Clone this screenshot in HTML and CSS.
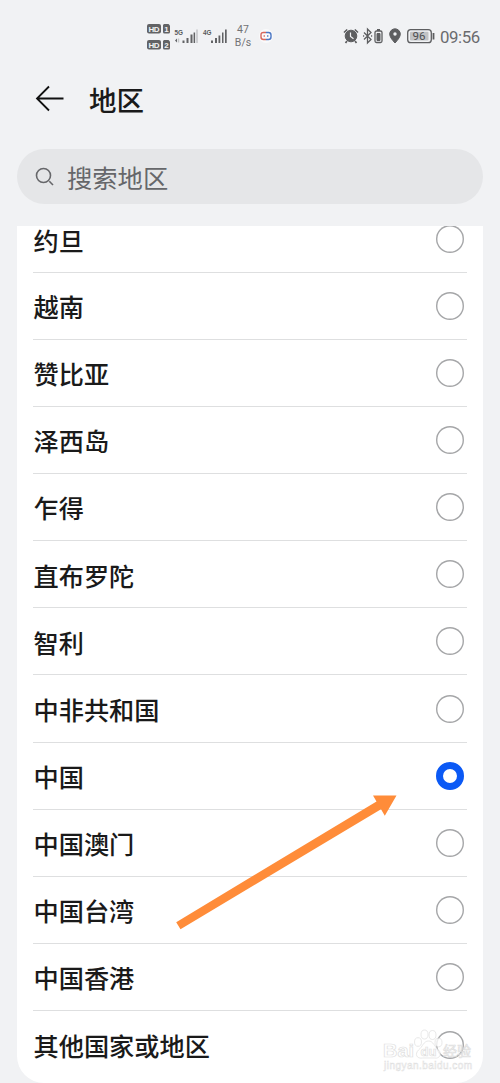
FILE: index.html
```html
<!DOCTYPE html>
<html lang="zh-CN">
<head>
<meta charset="utf-8">
<title>地区</title>
<link rel="stylesheet" href="styles.css">
</head>
<body>
<div class="screen">
  <div class="status">
    <svg class="status-net" width="86" height="32" viewBox="0 0 86 32">
      <g fill="#626365">
        <rect x="0" y="4" width="14" height="9.500" rx="2"/>
        <path d="M17 4h4.500l1.500 1.500v6.500q0 1.500-1.500 1.500h-4q-1.500 0-1.500-1.500v-7z"/>
        <rect x="0" y="20" width="14" height="9.500" rx="2"/>
        <path d="M17 20h4.500l1.500 1.500v6.500q0 1.500-1.500 1.500h-4q-1.500 0-1.500-1.500v-7z"/>
        <path d="M35.500 20.500h2v2.500h-2zM39.500 18h2v5h-2zM43.500 14.500h2v8.500h-2zM46.600 12.500h1.500v10.500h-1.500zM64 20.500h2v2.500h-2zM68 18h2v5h-2zM71.500 15.500h1.800v7.500h-1.800zM75 12.500h1.500v10.500h-1.500zM78 9.500h1.700v13.500h-1.700z"/>
        <path d="M28 20.500l2-2v4z"/>
      </g>
      <path d="M31.500 18.500v4M50 9.500v13.500" stroke="#c4c5c7" stroke-width="1.500"/>
      <g class="hd">
        <text x="1.600" y="11.700" textLength="11">HD</text><text x="17.300" y="11.700">1</text>
        <text x="1.600" y="27.700" textLength="11">HD</text><text x="17.300" y="27.700">2</text>
      </g>
      <g class="gen"><text x="27.500" y="15" textLength="8.500" lengthAdjust="spacingAndGlyphs">5G</text><text x="56" y="15" textLength="8.500" lengthAdjust="spacingAndGlyphs">4G</text></g>
    </svg>
    <div class="speed"><span>47</span><span>B/s</span></div>
    <svg class="status-bot" width="14" height="14" viewBox="0 0 14 14">
      <circle cx="7" cy="7" r="7" fill="#fafafb"/>
      <path d="M7 3.500H4.500Q2 3.500 2 6v2q0 2.500 2.500 2.500H7" fill="none" stroke="#d6675c" stroke-width="1.400"/>
      <path d="M7 3.500h2.500Q12 3.500 12 6v2q0 2.500-2.500 2.500H7" fill="none" stroke="#4c78c4" stroke-width="1.400"/>
      <path d="M5.200 6v2" stroke="#d6675c"/><path d="M8.800 6v2" stroke="#4c78c4"/>
    </svg>
    <svg class="status-icons" width="92" height="18" viewBox="0 0 92 18">
      <g fill="none" stroke="#5d5e60">
        <circle cx="8" cy="9" r="5.800" fill="#5d5e60"/>
        <path d="M1 5.500L4.200 2.500M11.800 2.500L15 5.500M4 14L2.500 16M12 14l1.500 2" stroke-width="1.700"/>
        <path d="M7.500 5.500v4l3 2.200" stroke="#f1f2f4" stroke-width="1.200"/>
        <path d="M21 5.500l7 7-3.500 3.500V2L28 5.500l-7 7" stroke-width="1.300"/>
        <circle cx="20.700" cy="9" r=".4"/><circle cx="28.700" cy="9" r=".4"/>
        <rect x="32" y="4" width="7" height="11.500" rx="1.500" stroke-width="1.300"/>
        <path d="M34 3h3" stroke-width="2"/>
        <path d="M34 6.500h3v7h-3z" fill="#5d5e60"/>
        <path d="M52 1.800a5.300 5.300 0 0 1 5.300 5.300Q57.300 10.500 52 16Q46.700 10.500 46.700 7.100A5.300 5.300 0 0 1 52 1.800z" fill="#5d5e60"/>
        <circle cx="52" cy="7" r="1.700" fill="#f1f2f4" stroke="none"/>
        <rect x="64.700" y="2.700" width="23.600" height="13" rx="3" stroke-width="1.300"/>
        <rect x="67" y="4.800" width="18.500" height="8.800" rx="1" fill="#c2c3c5" stroke="none"/>
        <path d="M90.500 6v6.500" stroke-width="1.800"/>
      </g>
      <text class="battery" x="69.500" y="13.200" textLength="13">96</text>
    </svg>
    <span class="clock">09:56</span>
  </div>

  <div class="header">
    <svg width="30" height="30" viewBox="0 0 30 30" fill="none" stroke="#111" stroke-width="1.800">
      <path d="M28.500 14.500H2M14 2.500L2 14.500l12 12"/>
    </svg>
    <h1 class="title">地区</h1>
  </div>

  <div class="search">
    <svg width="20" height="20" viewBox="0 0 20 20" fill="none" stroke="#66676a" stroke-width="1.600">
      <circle cx="8.500" cy="8.500" r="7"/><path d="M14.300 14.300l3.700 3.700"/>
    </svg>
    <span class="search-text">搜索地区</span>
  </div>

  <div class="list">
    <div class="row first"><span>约旦</span><i class="radio"></i></div>
    <div class="row"><span>越南</span><i class="radio"></i></div>
    <div class="row"><span>赞比亚</span><i class="radio"></i></div>
    <div class="row"><span>泽西岛</span><i class="radio"></i></div>
    <div class="row"><span>乍得</span><i class="radio"></i></div>
    <div class="row"><span>直布罗陀</span><i class="radio"></i></div>
    <div class="row"><span>智利</span><i class="radio"></i></div>
    <div class="row"><span>中非共和国</span><i class="radio"></i></div>
    <div class="row"><span>中国</span><i class="radio checked"></i></div>
    <div class="row"><span>中国澳门</span><i class="radio"></i></div>
    <div class="row"><span>中国台湾</span><i class="radio"></i></div>
    <div class="row"><span>中国香港</span><i class="radio"></i></div>
    <div class="row"><span>其他国家或地区</span><i class="radio"></i></div>
  </div>

  <svg class="arrow" width="222" height="136" viewBox="0 0 222 136">
    <path fill="#ff8c39" d="M1.200 127.200L201.500 6.500L198 0.500L221.500 0.500L209.800 20.800L206 14.200L5.500 134.200Z"/>
  </svg>

  <svg class="watermark" width="96" height="46" viewBox="0 0 96 46">
    <g fill="#fff" stroke="#d8d8d8" stroke-width=".7">
      <ellipse cx="36" cy="14" rx="3.500" ry="4.300"/>
      <ellipse cx="42.500" cy="6.500" rx="3.500" ry="4.500"/>
      <ellipse cx="50.500" cy="7" rx="3.500" ry="4.500"/>
      <ellipse cx="56.500" cy="14.500" rx="3.500" ry="4.300"/>
      <path d="M46.500 13c5 0 6 6 10 9 4 4 1 9-4 8h-12c-6 1-8-4-4-8 4-3 5-9 10-9z"/>
      <text class="wm-brand" x="1" y="29" textLength="31" lengthAdjust="spacingAndGlyphs">Bai</text>
      <text class="wm-du" x="38.500" y="28">du</text>
      <text class="wm-cn" x="61" y="28" textLength="28">经验</text>
      <text class="wm-url" x="2" y="41" textLength="88">jingyan.baidu.com</text>
    </g>
  </svg>
</div>
</body>
</html>
```
FILE: styles.css
```css
* { box-sizing: border-box; }

body {
  margin: 0;
  background: #f1f2f4;
  font-family: "Noto Sans CJK SC", sans-serif;
  color: #1a1a1a;
}

.screen {
  position: relative;
  width: 500px;
  height: 1083px;
  overflow: hidden;
}

.status {
  display: flex;
  align-items: flex-start;
  height: 72px;
  padding: 20px 0 0 147px;
}

.status-net, .status-bot, .status-icons { flex: none; }

.hd {
  fill: #f1f2f4;
  font: bold 8px "Liberation Sans", sans-serif;
}

.gen {
  fill: #58595b;
  font: bold 8px "Liberation Sans", sans-serif;
}

.speed {
  display: flex;
  flex-direction: column;
  align-items: center;
  width: 20px;
  padding-top: 4px;
  font: 10.5px/12.500px Roboto, sans-serif;
  color: #727375;
}

.status-bot { margin: 9px 0 0 6px; }
.status-icons { margin: 7px 0 0 70px; }

.battery {
  fill: #4e4f51;
  font: 11.500px Roboto, sans-serif;
}

.clock {
  margin: 7px 0 0 5px;
  font: 16.800px/20px Roboto, sans-serif;
  letter-spacing: -.4px;
  color: #6a6b6e;
}

.header {
  display: flex;
  align-items: center;
  gap: 24px;
  height: 54px;
  padding-left: 35px;
}

.title {
  margin: 0;
  font-size: 27.500px;
  line-height: 40px;
  font-weight: 500;
}

.search {
  display: flex;
  align-items: center;
  gap: 12px;
  height: 55px;
  margin: 23px 17px 22px 16.500px;
  padding-left: 18.500px;
  border-radius: 28px;
  background: #e5e6e8;
}

.search-text {
  font-size: 25.300px;
  line-height: 40px;
  color: #66676a;
}

.list {
  height: 857px;
  margin: 0 17px 0 16.500px;
  padding: 0 16px 0 16.500px;
  overflow: hidden;
  border-radius: 0 0 27px 27px;
  background: #fff;
}

.row {
  display: flex;
  align-items: center;
  justify-content: space-between;
  height: 67.120px;
  padding: 0 3px 0 .5px;
  border-bottom: 1px solid #dedfe0;
  font-size: 25.200px;
  line-height: 26px;
  font-weight: 500;
}

.row span { padding-top: .4px; }
.row.first { margin-top: -20.300px; }
.row.first span { padding-top: 2px; }
.row:last-child { border-bottom: 0; }

.radio {
  width: 28px;
  height: 28px;
  border-radius: 50%;
  box-shadow: inset 0 0 0 1.400px #a5a6a8;
}

.radio.checked {
  box-shadow: none;
  border: 7px solid #0b59f5;
}

.arrow {
  position: absolute;
  left: 175px;
  top: 795px;
}

.watermark {
  position: absolute;
  left: 382px;
  top: 1028px;
  opacity: .8;
}

.watermark text { font-family: "Liberation Sans", "Noto Sans CJK SC", sans-serif; }
.wm-brand { font-size: 19px; font-weight: bold; }
.wm-du { font-size: 13px; font-weight: bold; }
.watermark .wm-cn { font-size: 14px; }
.wm-url { font-size: 10px; stroke-width: .5px; }
```
